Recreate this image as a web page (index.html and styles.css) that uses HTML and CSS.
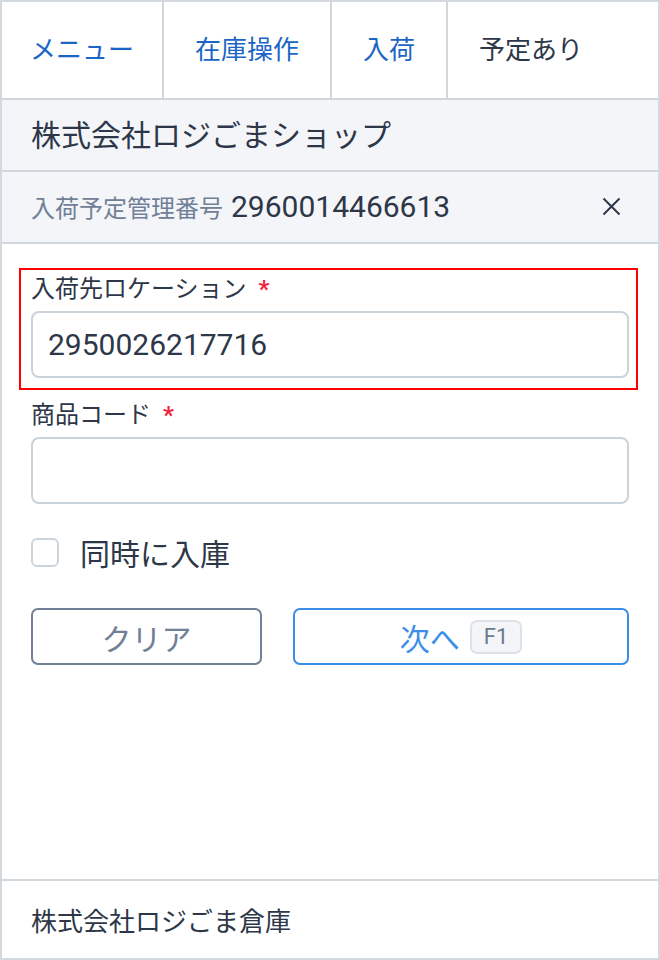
FILE: index.html
```html
<!DOCTYPE html>
<html lang="ja">
<head>
  <meta charset="UTF-8">
  <title>入荷</title>
  <link rel="stylesheet" href="styles.css">
</head>
<body>

  <div class="app">
    <nav class="nav">
      <a class="nav-item link">メニュー</a>
      <a class="nav-item link">在庫操作</a>
      <a class="nav-item link">入荷</a>
      <span class="nav-item current">予定あり</span>
    </nav>

    <div class="shop-bar">株式会社ロジごまショップ</div>

    <div class="plan-bar">
      <span class="plan-label">入荷予定管理番号</span>
      <span class="plan-number">2960014466613</span>
      <button class="close-btn" type="button" aria-label="閉じる">
        <svg width="19" height="19" viewBox="0 0 19 19">
          <path d="M1.5 1.5 L17.5 17.5 M17.5 1.5 L1.5 17.5" stroke="#2d3748" stroke-width="2" fill="none"/>
        </svg>
      </button>
    </div>

    <form class="form">
      <div class="field focused">
        <label class="field-label">入荷先ロケーション<span class="req">*</span></label>
        <input class="text-input" type="text" value="2950026217716">
      </div>

      <div class="field">
        <label class="field-label">商品コード<span class="req">*</span></label>
        <input class="text-input" type="text">
      </div>

      <label class="check-row">
        <input class="check" type="checkbox">
        <span>同時に入庫</span>
      </label>

      <div class="actions">
        <button class="btn btn-clear" type="button">クリア</button>
        <button class="btn btn-next" type="submit">次へ <kbd class="key">F1</kbd></button>
      </div>
    </form>

    <footer class="footer">株式会社ロジごま倉庫</footer>
  </div>

</body>
</html>
```

FILE: styles.css
```css
* {
  box-sizing: border-box;
}

body {
  margin: 0;
  font-family: Roboto, "Noto Sans CJK JP", sans-serif;
  color: #2d3748;
  background: #fff;
}

.app {
  height: 960px;
  border: 2px solid #d3d9de;
  display: flex;
  flex-direction: column;
}

.nav {
  display: flex;
  height: 98px;
  border-bottom: 2px solid #cfd6dc;
}

.nav-item {
  display: flex;
  align-items: center;
  padding: 0 31px 5px;
  font-size: 26px;
  border-right: 2px solid #cfd6dc;
}

.nav-item:first-child {
  padding: 0 28px 5px;
}

.nav-item.link {
  color: #1b66c4;
}

.nav-item.current {
  flex: 1;
  border-right: none;
  color: #2d3748;
}

.shop-bar {
  height: 72px;
  display: flex;
  align-items: center;
  padding: 0 29px 5px;
  font-size: 30px;
  background: #f3f5f9;
  border-bottom: 2px solid #cfd6dc;
}

.plan-bar {
  height: 72px;
  display: flex;
  align-items: center;
  gap: 8px;
  padding: 0 29px 2px;
  background: #f3f5f9;
  border-bottom: 2px solid #cfd6dc;
}

.plan-label {
  font-size: 24px;
  color: #718096;
}

.plan-number {
  font-size: 30px;
  flex: 1;
}

.close-btn {
  border: none;
  background: none;
  padding: 0;
  margin-right: 8px;
  display: flex;
}

.form {
  flex: 1;
  padding: 24px 29px 0;
}

.field {
  display: flex;
  flex-direction: column;
}

.field + .field {
  margin-top: 10px;
}

.field.focused {
  border: 2px solid #ff0000;
  margin: 0 -9px 0 -12px;
  padding: 4px 7px 10px 10px;
}

.field-label {
  font-size: 24px;
  line-height: 30px;
  margin-bottom: 7px;
}

.req {
  color: #f0243f;
  font-weight: bold;
  margin-left: 12px;
}

.text-input {
  height: 67px;
  border: 2px solid #cbd3da;
  border-radius: 8px;
  padding: 0 15px;
  font-family: Roboto, "Noto Sans CJK JP", sans-serif;
  font-size: 30px;
  color: #2d3748;
  outline: none;
}

.check-row {
  display: flex;
  align-items: center;
  gap: 21px;
  margin-top: 28px;
  height: 40px;
  font-size: 30px;
}

.check {
  appearance: none;
  margin: 0;
  width: 28px;
  height: 29px;
  border: 2px solid #cdd5dc;
  border-radius: 6px;
  background: #fff;
}

.actions {
  display: grid;
  grid-template-columns: 231px 1fr;
  gap: 31px;
  margin-top: 36px;
}

.btn {
  height: 57px;
  background: #fff;
  border-radius: 7px;
  font-family: Roboto, "Noto Sans CJK JP", sans-serif;
  font-size: 30px;
  display: flex;
  align-items: center;
  justify-content: center;
  gap: 10px;
  padding: 0;
}

.btn-clear {
  border: 2px solid #718096;
  color: #718096;
}

.btn-next {
  border: 2px solid #3b8ee8;
  color: #3b8ee8;
}

.key {
  font-family: Roboto, sans-serif;
  font-size: 22px;
  color: #6b7a8c;
  background: #f3f5f8;
  border: 2px solid #dde2e8;
  border-radius: 7px;
  height: 34px;
  padding: 0 12px;
  display: flex;
  align-items: center;
}

.footer {
  height: 79px;
  display: flex;
  align-items: center;
  padding: 0 29px;
  font-size: 26px;
  border-top: 2px solid #cfd6dc;
}
```
